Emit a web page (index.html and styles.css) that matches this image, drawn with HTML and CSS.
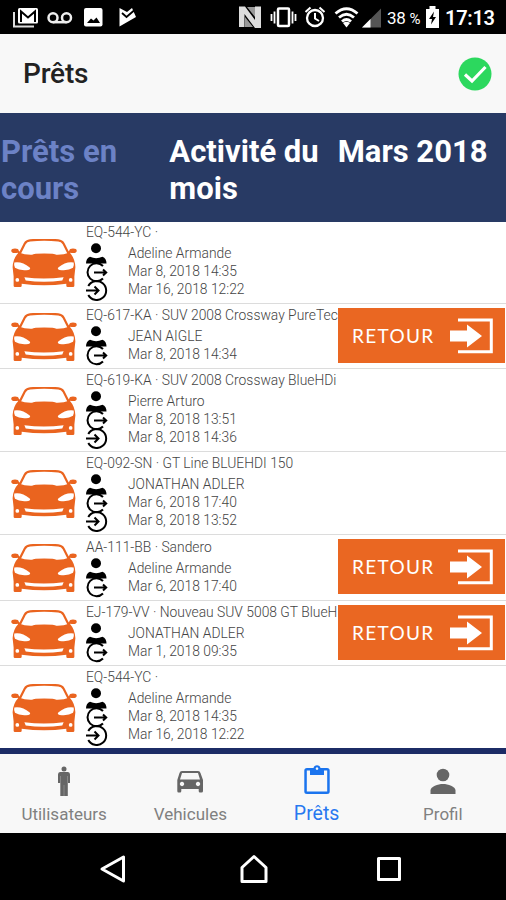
FILE: index.html
```html
<!DOCTYPE html>
<html lang="fr">

<head>
	<meta charset="utf-8">
	<meta name="viewport" content="width=device-width, initial-scale=1">
	<title>Prêts</title>
	<link rel="stylesheet" href="styles.css">
</head>

<body>
	<svg class="symbols" width="0" height="0">
		<symbol id="car" viewBox="0 0 195 146">
			<path d="M22 50 L40 14 Q45 5 56 4 Q98 0 140 4 Q151 5 156 14 L174 50" fill="none" stroke="#ea641f" stroke-width="6.5" />
			<ellipse cx="11" cy="35" rx="11" ry="7" fill="#ea641f" />
			<ellipse cx="184" cy="35" rx="11" ry="7" fill="#ea641f" />
			<path d="M18 36 l8 6 M177 36 l-8 6" stroke="#ea641f" stroke-width="6" />
			<path d="M22 40 Q42 48 62 47 Q66 43 98 43 Q130 43 134 47 Q154 48 174 40 Q190 58 191 84 L188 112 V139 Q188 143 184 143 H168 Q164 143 164 139 V133 Q98 142 31 133 V139 Q31 143 27 143 H11 Q7 143 7 139 V112 L4 84 Q5 58 22 40Z" fill="#ea641f" />
			<path d="M9 70 Q32 66 55 85 Q59 91 51 92 Q25 95 11 86 Q7 78 9 70Z M186 70 Q163 66 140 85 Q136 91 144 92 Q170 95 184 86 Q188 78 186 70Z" fill="#fff" />
			<path d="M39 114 Q97 122 156 114 L152 124 Q97 131 43 124Z" fill="#fff" />
			<circle cx="18" cy="122" r="5.500" fill="#fff" />
			<circle cx="177" cy="122" r="5.500" fill="#fff" />
		</symbol>
		<symbol id="user" viewBox="0 0 22 24">
			<circle cx="10" cy="6.300" r="5" />
			<path d="M0 21.500 Q0 16.500 4 14.800 Q10 17.500 16.500 14.800 Q20.500 16.500 20.500 21.500Z" />
		</symbol>
		<symbol id="out" viewBox="0 0 22 22">
			<path d="M17 5 A9 9 0 1 0 17 17.500" fill="none" stroke="#000" stroke-width="2" />
			<path d="M8 11.500 H20 M17 8.500 L20.200 11.500 L17 14.500" fill="none" stroke="#000" stroke-width="2" />
		</symbol>
		<symbol id="in" viewBox="0 0 22 22">
			<path d="M2.300 7 A9.500 9.500 0 1 1 2.300 16" fill="none" stroke="#000" stroke-width="2" />
			<path d="M0 11.500 H12 M8.500 7.500 L12.500 11.500 L8.500 15.500" fill="none" stroke="#000" stroke-width="2" />
		</symbol>
		<symbol id="return" viewBox="0 0 44 36">
			<path d="M9 2 H42.300 V33.700 H9" fill="none" stroke="#fff" stroke-width="3" />
			<path d="M1 12.500 H18 V6.500 L33 18 L18 29.500 V23.500 H1Z" fill="#fff" />
		</symbol>
	</svg>

	<div class="status-bar">
		<svg width="140" height="34" viewBox="0 0 140 34">
			<path d="M14 12 V26.500 H34" fill="none" stroke="#ddd" stroke-width="2" />
			<rect x="18" y="8" width="20" height="15.500" rx="1.500" fill="#fff" />
			<path d="M21 22 V11.500 L28 17.500 L35 11.500 V22" fill="none" stroke="#000" stroke-width="2" />
			<g fill="none" stroke="#eee" stroke-width="2.500">
				<circle cx="53" cy="17.700" r="4.500" />
				<circle cx="66.500" cy="17.700" r="4.500" />
				<path d="M53 22.200 H66.500" />
			</g>
			<rect x="84" y="8" width="18.500" height="18.500" rx="2" fill="#fff" />
			<path d="M87 23 L91 18.500 L93.500 20.500 L96.500 17.500 L100 23Z" fill="#000" />
			<path d="M119.500 8 L127 12 L132 8 L136 17 L119.500 26.500Z" fill="#fff" />
			<path d="M122 13 L126.500 17 L134 10.500" fill="none" stroke="#000" stroke-width="1.800" />
		</svg>
		<div class="status-right">
			<svg width="144" height="34" viewBox="237 0 144 34">
				<path d="M238 6.500 H244 L254 20 V6.500 H260 V28 H254 L243.500 14 V27 H238Z" fill="#ddd" />
				<path d="M246 7 H254 V17Z M244 17 V27 H252Z" fill="#999" />
				<rect x="277" y="8.500" width="11" height="17.500" rx="1" fill="none" stroke="#fff" stroke-width="2.500" />
				<path d="M270.500 14 V21 M273.500 11.500 V23.500 M291.500 11.500 V23.500 M294.500 14 V21" stroke="#fff" stroke-width="1.800" />
				<circle cx="314" cy="18" r="8" fill="none" stroke="#fff" stroke-width="2.300" />
				<path d="M314 13 V18.500 L318 21 M304.500 12 L309.500 7.500 M318.500 7.500 L323.500 12" fill="none" stroke="#fff" stroke-width="2" />
				<path d="M334.500 13.500 Q345.500 4 356.500 13.500 M338 17.500 Q345.500 11 353 17.500 M341 21.500 Q345.500 17.500 350 21.500" fill="none" stroke="#fff" stroke-width="2.800" />
				<path d="M342 23 Q345.500 20.500 349 23 L345.500 27.500Z" fill="#fff" />
				<path d="M361 27.500 L380 8.500 V27.500Z" fill="#555" />
				<path d="M361 27.500 L369.500 19 V27.500Z" fill="#fff" />
			</svg>
			<span class="battery-level">38 <small>%</small></span>
			<svg width="13" height="22" viewBox="0 0 13 22">
				<path d="M0 3 H3.500 V0 H9.500 V3 H13 V22 H0Z" fill="#fff" />
				<path d="M8 5.500 L3 13 H6 L5 18.500 L10 11 H7Z" fill="#000" />
			</svg>
			<span class="clock">17:13</span>
		</div>
	</div>

	<header class="header">
		<h1>Prêts</h1>
		<svg width="34" height="34" viewBox="0 0 34 34">
			<circle cx="17" cy="17" r="16.500" fill="#2cd85e" />
			<path d="M7 17.500 L14 24 L27.500 10" fill="none" stroke="#fff" stroke-width="3.200" />
		</svg>
	</header>

	<nav class="segments">
		<div class="segment muted">Prêts en cours</div>
		<div class="segment">Activité du mois</div>
		<div class="segment">Mars 2018</div>
	</nav>

	<main class="loans">
		<div class="loan first">
			<svg class="car"><use href="#car" /></svg>
			<div class="info">
				<div class="vehicle">EQ-544-YC ·</div>
				<div class="line"><svg class="user"><use href="#user" /></svg>Adeline Armande</div>
				<div class="line"><svg><use href="#out" /></svg>Mar 8, 2018 14:35</div>
				<div class="line"><svg><use href="#in" /></svg>Mar 16, 2018 12:22</div>
			</div>
		</div>
		<div class="loan open">
			<svg class="car"><use href="#car" /></svg>
			<div class="info">
				<div class="vehicle">EQ-617-KA · SUV 2008 Crossway PureTec</div>
				<div class="line"><svg class="user"><use href="#user" /></svg>JEAN AIGLE</div>
				<div class="line"><svg><use href="#out" /></svg>Mar 8, 2018 14:34</div>
			</div>
			<button class="return-btn">RETOUR<svg><use href="#return" /></svg></button>
		</div>
		<div class="loan">
			<svg class="car"><use href="#car" /></svg>
			<div class="info">
				<div class="vehicle">EQ-619-KA · SUV 2008 Crossway BlueHDi</div>
				<div class="line"><svg class="user"><use href="#user" /></svg>Pierre Arturo</div>
				<div class="line"><svg><use href="#out" /></svg>Mar 8, 2018 13:51</div>
				<div class="line"><svg><use href="#in" /></svg>Mar 8, 2018 14:36</div>
			</div>
		</div>
		<div class="loan">
			<svg class="car"><use href="#car" /></svg>
			<div class="info">
				<div class="vehicle">EQ-092-SN · GT Line BLUEHDI 150</div>
				<div class="line"><svg class="user"><use href="#user" /></svg>JONATHAN ADLER</div>
				<div class="line"><svg><use href="#out" /></svg>Mar 6, 2018 17:40</div>
				<div class="line"><svg><use href="#in" /></svg>Mar 8, 2018 13:52</div>
			</div>
		</div>
		<div class="loan open tall">
			<svg class="car"><use href="#car" /></svg>
			<div class="info">
				<div class="vehicle">AA-111-BB · Sandero</div>
				<div class="line"><svg class="user"><use href="#user" /></svg>Adeline Armande</div>
				<div class="line"><svg><use href="#out" /></svg>Mar 6, 2018 17:40</div>
			</div>
			<button class="return-btn">RETOUR<svg><use href="#return" /></svg></button>
		</div>
		<div class="loan open">
			<svg class="car"><use href="#car" /></svg>
			<div class="info">
				<div class="vehicle">EJ-179-VV · Nouveau SUV 5008 GT BlueH</div>
				<div class="line"><svg class="user"><use href="#user" /></svg>JONATHAN ADLER</div>
				<div class="line"><svg><use href="#out" /></svg>Mar 1, 2018 09:35</div>
			</div>
			<button class="return-btn">RETOUR<svg><use href="#return" /></svg></button>
		</div>
		<div class="loan last">
			<svg class="car"><use href="#car" /></svg>
			<div class="info">
				<div class="vehicle">EQ-544-YC ·</div>
				<div class="line"><svg class="user"><use href="#user" /></svg>Adeline Armande</div>
				<div class="line"><svg><use href="#out" /></svg>Mar 8, 2018 14:35</div>
				<div class="line"><svg><use href="#in" /></svg>Mar 16, 2018 12:22</div>
			</div>
		</div>
	</main>

	<nav class="tabs">
		<div class="tab">
			<svg viewBox="0 0 32 32">
				<circle cx="16" cy="4" r="2.500" />
				<path d="M12 7 H20 Q22 7 22 9.500 V18 H19.800 V31 H12.300 V18 H10 V9.500 Q10 7 12 7Z" />
				<path d="M12.500 11 V18 M19.500 11 V18 M16 20 V31" stroke="#a0a0a0" stroke-width="0.600" />
			</svg>
			<span>Utilisateurs</span>
		</div>
		<div class="tab">
			<svg viewBox="0 0 32 32">
				<path fill-rule="evenodd" d="M8 6 H24 Q26 6 26.500 8 L29 15 V26 Q29 27.500 27.500 27.500 H26 Q24.700 27.500 24.700 26 V24 H7.300 V26 Q7.300 27.500 6 27.500 H4.500 Q3.300 27.500 3.300 26 V15 L5.500 8 Q6 6 8 6Z M8 8 L6 14.500 H26 L24 8Z M8 16.800 a2.200 2.200 0 1 0 0.010 0Z M24 16.800 a2.200 2.200 0 1 0 0.010 0Z" />
			</svg>
			<span>Vehicules</span>
		</div>
		<div class="tab active">
			<svg viewBox="0 0 32 32">
				<path fill-rule="evenodd" d="M6 3 H12.500 A3.600 3.600 0 0 1 19.500 3 H26 Q28.700 3 28.700 5.500 V26.500 Q28.700 29 26 29 H6 Q3.300 29 3.300 26.500 V5.500 Q3.300 3 6 3Z M5.800 5.500 V26.500 H26.200 V5.500 H23 V10 H9 V5.500Z M16 2.300 a1.300 1.300 0 1 0 0.010 0Z" />
			</svg>
			<span>Prêts</span>
		</div>
		<div class="tab">
			<svg viewBox="0 0 32 32">
				<circle cx="16" cy="10" r="6.300" />
				<path d="M3.500 29 V25.500 C3.500 21.500 11 19 16 19 S28.500 21.500 28.500 25.500 V29Z" />
			</svg>
			<span>Profil</span>
		</div>
	</nav>

	<footer class="system-nav">
		<svg width="28" height="30" viewBox="0 0 28 30"><path d="M3 15 L24.500 3 V27Z" /></svg>
		<svg width="30" height="30" viewBox="0 0 30 30"><path d="M3 27.500 V13.500 L15 2.500 L27 13.500 V27.500Z" /></svg>
		<svg width="26" height="30" viewBox="0 0 26 30"><path d="M2.500 4.500 H23.500 V25.500 H2.500Z" /></svg>
	</footer>
</body>

</html>
```
FILE: styles.css
```css
html,
body {
	height: 100%;
	margin: 0;
	padding: 0;
}

body {
	display: flex;
	flex-direction: column;
	font-family: Roboto, sans-serif;
	background: #fff;
	overflow: hidden;
}

svg {
	display: block;
	flex: none;
}

.symbols {
	position: absolute;
}

.status-bar {
	display: flex;
	justify-content: space-between;
	height: 34px;
	background: #000;
	color: #fff;
}

.status-right {
	display: flex;
	align-items: center;
	padding-right: 11px;
}

.battery-level {
	width: 39px;
	margin-left: 5px;
	padding-top: 2px;
	font-size: 17px;
	font-weight: 400;
	letter-spacing: -0.3px;
	white-space: nowrap;
}

.battery-level small {
	font-size: 15px;
}

.clock {
	width: 50px;
	margin-left: 6px;
	padding-top: 2px;
	font-size: 20px;
	font-weight: 600;
	letter-spacing: -0.3px;
	white-space: nowrap;
}

.header {
	display: flex;
	align-items: center;
	justify-content: space-between;
	box-sizing: border-box;
	height: 79px;
	padding: 0 14px 0 23px;
	background: #f8f8f8;
}

.header h1 {
	margin: 0;
	font-size: 28px;
	font-weight: 500;
	letter-spacing: -0.2px;
	color: #222;
}

.segments {
	display: flex;
	box-sizing: border-box;
	height: 109px;
	padding: 20px 0 0 1px;
	background: #283a64;
}

.segment {
	flex: 1 1 0;
	font-size: 31px;
	line-height: 37px;
	font-weight: 700;
	color: #fff;
}

.segment.muted {
	color: #6c82c6;
}

.loans {
	border-bottom: 6px solid #1c2c66;
}

.loan {
	display: flex;
	box-sizing: border-box;
	height: 83px;
	border-bottom: 1px solid #dcdcdc;
	overflow: hidden;
}

.loan.open {
	height: 65px;
}

.loan.first {
	height: 82px;
}

.loan.open.tall {
	height: 66px;
}

.loan.last {
	height: 82px;
	border-bottom: none;
}

.car {
	align-self: center;
	width: 66px;
	height: 49px;
	margin: 2px 9px 0 11px;
}

.info {
	flex: 1;
	min-width: 0;
	padding-top: 2px;
	font-size: 13.85px;
	font-weight: 300;
	color: #444;
	white-space: nowrap;
}

.first .info {
	padding-top: 1px;
}

.tall .info {
	padding-top: 3px;
}

.vehicle {
	height: 21px;
	line-height: 18px;
}

.line {
	display: flex;
	align-items: center;
	height: 18.2px;
}

.line svg {
	width: 22px;
	height: 22px;
	margin: 2px 20px 0 0;
}

.line .user {
	height: 24px;
}

.return-btn {
	display: flex;
	flex: none;
	align-items: center;
	justify-content: space-between;
	width: 167px;
	height: 55px;
	margin: 4px 1px 0 0;
	padding: 0 12px 0 14px;
	border: none;
	background: #ea6722;
	font-family: Lato, sans-serif;
	font-size: 19px;
	letter-spacing: 1.3px;
	color: #fff;
}

.return-btn svg {
	width: 44px;
	height: 36px;
}

.tabs {
	display: flex;
	height: 79px;
	padding-left: 1px;
	background: #f8f8f8;
}

.tab {
	display: flex;
	flex: 1;
	flex-direction: column;
	align-items: center;
	padding-top: 11px;
	font-size: 17px;
	color: #808080;
}

.tab svg {
	width: 32px;
	height: 32px;
	fill: #666;
}

.tab span {
	line-height: 20px;
	margin-top: 7px;
}

.tab.active {
	font-size: 19.5px;
	color: #2878f0;
}

.tab.active svg {
	fill: #1b74ee;
}

.system-nav {
	display: flex;
	flex: 1;
	align-items: center;
	padding: 5px 0 0 99px;
	background: #000;
}

.system-nav svg {
	fill: none;
	stroke: #fff;
	stroke-width: 3;
	stroke-linejoin: round;
}

.system-nav svg + svg {
	margin-left: 112px;
}

.system-nav svg + svg + svg {
	margin-left: 107px;
}
```
